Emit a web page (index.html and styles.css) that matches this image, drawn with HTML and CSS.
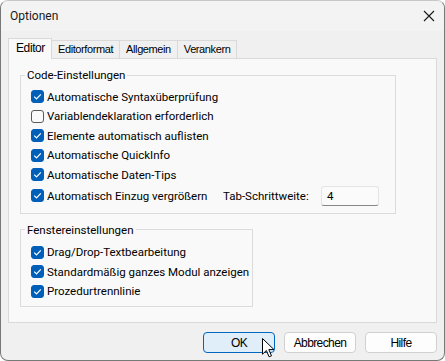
FILE: index.html
```html
<!DOCTYPE html>
<html lang="de">
  <head>
    <meta charset="UTF-8" />
    <title>Optionen</title>
    <link rel="stylesheet" href="styles.css">
  </head>
  <body>
    <div class="window">
      <div class="titlebar">
        <span class="title">Optionen</span>
        <svg class="close" width="12" height="12" viewBox="0 0 12 12">
          <path d="M1 1 L11 11 M11 1 L1 11" stroke="#1a1a1a" stroke-width="1.1" fill="none" />
        </svg>
      </div>

      <div class="content">
        <div class="tabs">
          <div class="tab active">Editor</div>
          <div class="tab">Editorformat</div>
          <div class="tab">Allgemein</div>
          <div class="tab">Verankern</div>
        </div>

        <div class="panel">
          <fieldset class="group group-code">
            <legend>Code-Einstellungen</legend>
            <div class="row"><span class="check on"><svg viewBox="0 0 13 13"><path d="M3.2 6.7 L5.5 9 L9.8 4.3" /></svg></span>Automatische Syntaxüberprüfung</div>
            <div class="row"><span class="check"></span>Variablendeklaration erforderlich</div>
            <div class="row"><span class="check on"><svg viewBox="0 0 13 13"><path d="M3.2 6.7 L5.5 9 L9.8 4.3" /></svg></span>Elemente automatisch auflisten</div>
            <div class="row"><span class="check on"><svg viewBox="0 0 13 13"><path d="M3.2 6.7 L5.5 9 L9.8 4.3" /></svg></span>Automatische QuickInfo</div>
            <div class="row"><span class="check on"><svg viewBox="0 0 13 13"><path d="M3.2 6.7 L5.5 9 L9.8 4.3" /></svg></span>Automatische Daten-Tips</div>
            <div class="row row-last">
              <span class="check on"><svg viewBox="0 0 13 13"><path d="M3.2 6.7 L5.5 9 L9.8 4.3" /></svg></span>
              <span class="row-text">Automatisch Einzug vergrößern</span>
              <span class="field-label">Tab-Schrittweite:</span>
              <div class="input">4</div>
            </div>
          </fieldset>

          <fieldset class="group group-window">
            <legend>Fenstereinstellungen</legend>
            <div class="row"><span class="check on"><svg viewBox="0 0 13 13"><path d="M3.2 6.7 L5.5 9 L9.8 4.3" /></svg></span>Drag/Drop-Textbearbeitung</div>
            <div class="row"><span class="check on"><svg viewBox="0 0 13 13"><path d="M3.2 6.7 L5.5 9 L9.8 4.3" /></svg></span>Standardmäßig ganzes Modul anzeigen</div>
            <div class="row"><span class="check on"><svg viewBox="0 0 13 13"><path d="M3.2 6.7 L5.5 9 L9.8 4.3" /></svg></span>Prozedurtrennlinie</div>
          </fieldset>
        </div>

        <div class="buttons">
          <button class="button default">OK</button>
          <button class="button">Abbrechen</button>
          <button class="button">Hilfe</button>
        </div>
      </div>

      <svg class="cursor" width="13" height="20" viewBox="0 0 13 20">
        <path d="M0.5 0.5 L0.5 16.2 L4.4 12.5 L7.1 18.8 L9.5 17.8 L6.8 11.6 L12 11.6 Z" fill="#fff" stroke="#000" stroke-width="1" stroke-linejoin="round" />
      </svg>
    </div>
  </body>
</html>
```

FILE: styles.css
```css
body {
  margin: 0;
  background-color: rgb(255, 255, 255);
  font-family: Roboto, "Noto Sans", sans-serif;
  font-size: 11.5px;
  color: rgb(0, 0, 0);
}

.window {
  position: relative;
  width: 445px;
  height: 361px;
  box-sizing: border-box;
  border: 1px solid rgb(120, 120, 120);
  border-top-color: rgb(200, 200, 200);
  border-radius: 8px;
  background-color: rgb(240, 240, 240);
  overflow: hidden;
}

.titlebar {
  height: 30px;
  display: flex;
  align-items: center;
  justify-content: space-between;
  padding: 0 9px 0 9px;
  background-color: rgb(243, 243, 243);
}
.title {
  font-size: 12px;
  color: rgb(26, 26, 26);
}

.content {
  padding: 7px;
}

.tabs {
  display: flex;
  align-items: flex-end;
  height: 20px;
  font-family: "Liberation Sans", Arial, sans-serif;
  font-size: 11px;
  letter-spacing: -0.4px;
}
.tab {
  height: 18px;
  box-sizing: border-box;
  padding: 0 6px;
  line-height: 17px;
  border: 1px solid rgb(217, 217, 217);
  border-bottom: none;
  border-left: none;
  background-color: rgb(240, 240, 240);
}
.tab.active {
  position: relative;
  z-index: 1;
  height: 21px;
  width: 44px;
  margin-bottom: -1px;
  padding-left: 7px;
  line-height: 19px;
  font-size: 12px;
  border-left: 1px solid rgb(217, 217, 217);
  background-color: rgb(249, 249, 249);
}

.panel {
  height: 265px;
  box-sizing: border-box;
  border: 1px solid rgb(217, 217, 217);
  background-color: rgb(249, 249, 249);
  padding: 8px 11px 0 11px;
}

.group {
  margin: 0;
  padding: 4px 10px 6px 10px;
  border: 1px solid rgb(220, 220, 220);
  min-width: 0;
}
.group legend {
  margin-left: -6px;
  padding: 0 2px;
  line-height: 16px;
}
.group-code {
  width: 376px;
  box-sizing: border-box;
}
.group-window {
  width: 233px;
  box-sizing: border-box;
  margin-top: 8px;
  padding-top: 5px;
  padding-bottom: 5px;
}

.row {
  display: flex;
  align-items: center;
  height: 19.5px;
  white-space: nowrap;
}
.row-last {
  height: 22px;
}
.row-text {
  width: 176px;
  flex: none;
}
.field-label {
  width: 98px;
  flex: none;
}

.check {
  width: 13px;
  height: 13px;
  box-sizing: border-box;
  flex: none;
  margin-right: 3px;
  border: 1px solid rgb(90, 90, 90);
  border-radius: 3px;
  background-color: rgb(250, 250, 250);
}
.check.on {
  border-color: rgb(0, 95, 184);
  background-color: rgb(0, 95, 184);
}
.check svg {
  display: block;
  width: 13px;
  height: 13px;
  margin: -1px;
}
.check svg path {
  fill: none;
  stroke: rgb(255, 255, 255);
  stroke-width: 1.2;
}

.input {
  width: 58px;
  height: 20px;
  box-sizing: border-box;
  border: 1px solid rgb(229, 229, 229);
  border-bottom-color: rgb(134, 134, 134);
  border-radius: 3px;
  background-color: rgb(251, 251, 251);
  padding-left: 5px;
  line-height: 18px;
}

.buttons {
  display: flex;
  justify-content: flex-end;
  gap: 9px;
  margin-top: 9px;
}
.button {
  width: 72px;
  height: 21px;
  padding: 0;
  border: 1px solid rgb(208, 208, 208);
  border-radius: 4px;
  background-color: rgb(253, 253, 253);
  font-family: "Liberation Sans", Arial, sans-serif;
  font-size: 12px;
  letter-spacing: -0.6px;
  color: rgb(0, 0, 0);
}
.button.default {
  border-color: rgb(0, 103, 192);
  background-color: rgb(224, 238, 249);
}

.cursor {
  position: absolute;
  left: 261px;
  top: 337px;
}
```
